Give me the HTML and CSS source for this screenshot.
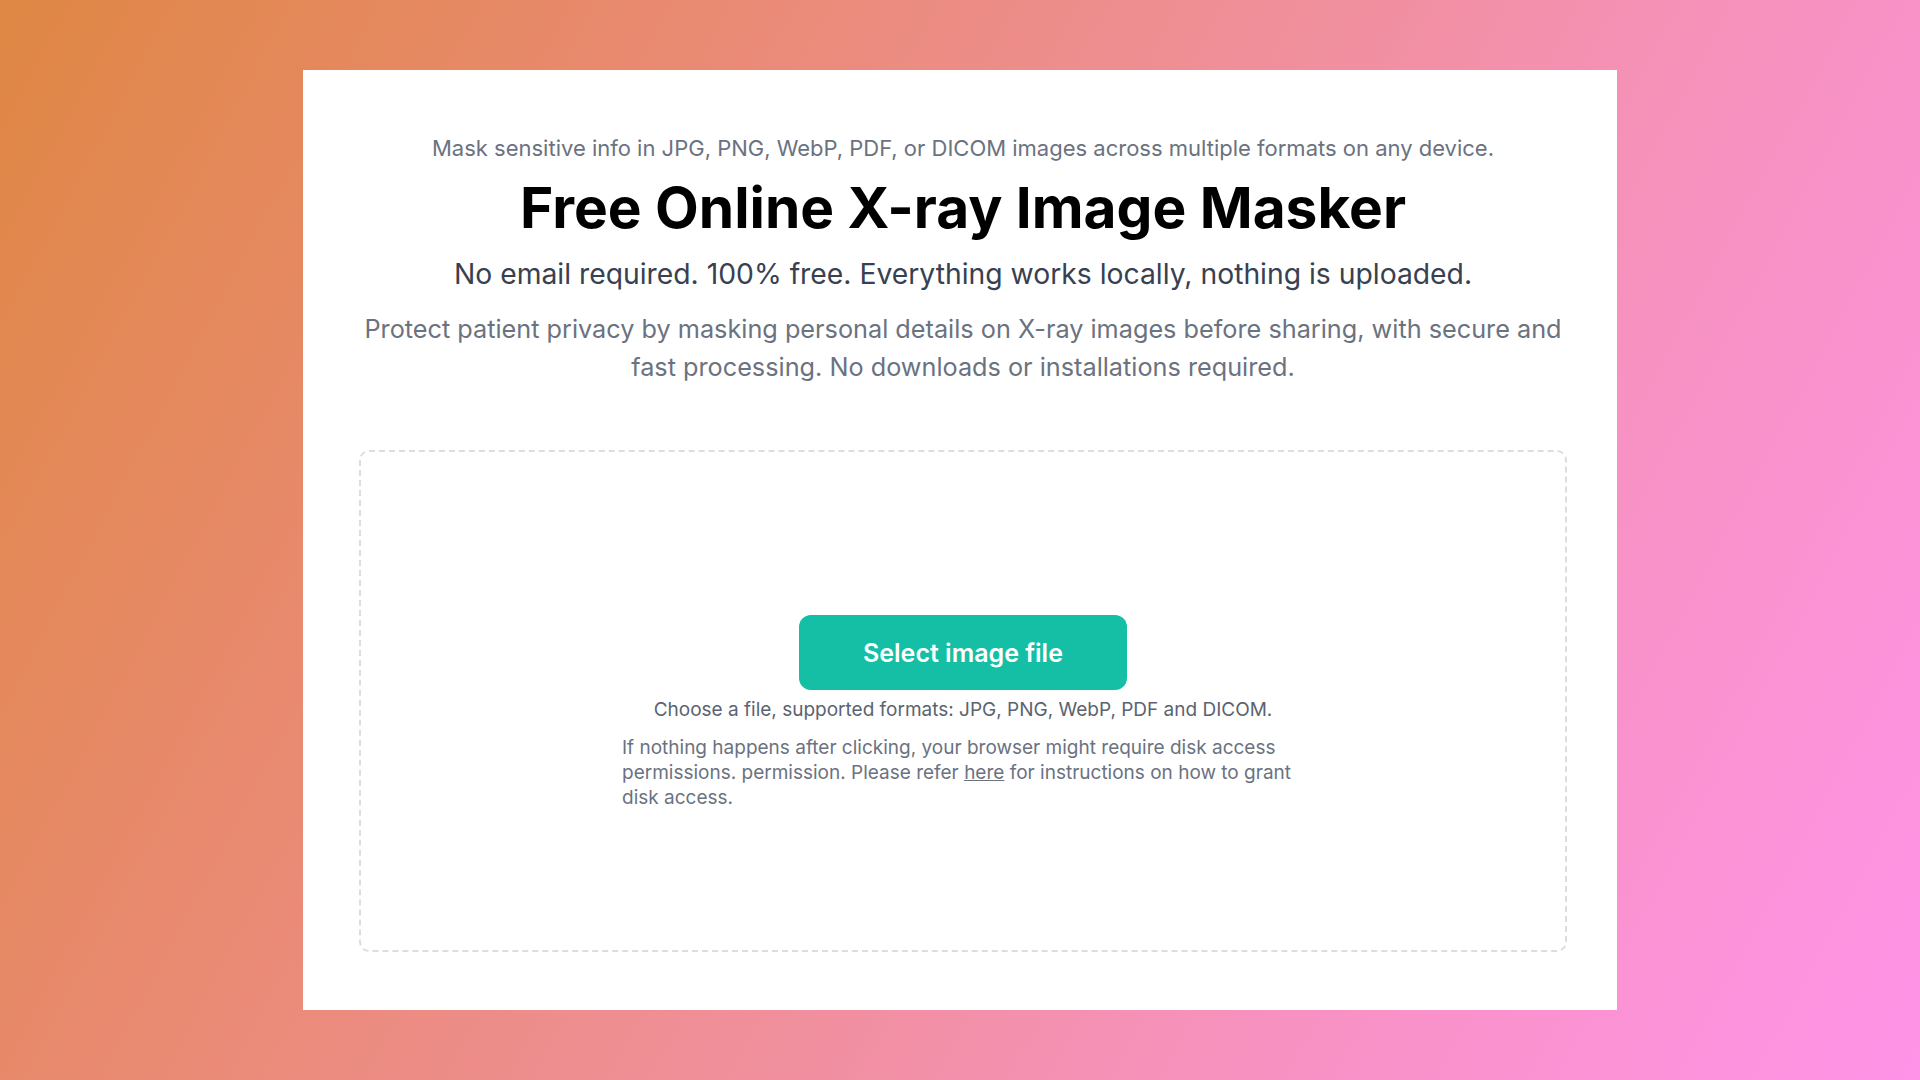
FILE: index.html
```html
<!DOCTYPE html>
<html lang="en">
<head>
<meta charset="utf-8">
<title>Free Online X-ray Image Masker</title>
<link rel="stylesheet" href="styles.css">
</head>
<body>
  <main class="card">
    <p class="eyebrow">Mask sensitive info in JPG, PNG, WebP, PDF, or DICOM images across multiple formats on any device.</p>
    <h1 class="title">Free Online X-ray Image Masker</h1>
    <p class="subtitle">No email required. 100% free. Everything works locally, nothing is uploaded.</p>
    <p class="desc">Protect patient privacy by masking personal details on X-ray images before sharing, with secure and fast processing. No downloads or installations required.</p>
    <section class="dropzone">
      <button class="select-btn" type="button">Select image file</button>
      <p class="formats">Choose a file, supported formats: JPG, PNG, WebP, PDF and DICOM.</p>
      <p class="help">If nothing happens after clicking, your browser might require disk access permissions. permission. Please refer <a href="#" class="help-link">here</a> for instructions on how to grant disk access.</p>
    </section>
  </main>
</body>
</html>
```
FILE: styles.css
```css
* { box-sizing: border-box; }

html, body {
  margin: 0;
  height: 100%;
}

body {
  font-family: Inter, "Noto Sans", "Liberation Sans", sans-serif;
  background: linear-gradient(118deg, #df8744 0%, #e98a72 28%, #f08f9a 52%, #f892c6 76%, #ff93e8 100%);
  display: flex;
  align-items: center;
  justify-content: center;
}

.card {
  width: 1314px;
  height: 940px;
  background: #ffffff;
  padding: 64px 50px 58px 56px;
  display: flex;
  flex-direction: column;
  align-items: center;
  text-align: center;
}

.eyebrow {
  margin: 0;
  font-size: 22px;
  line-height: 28px;
  color: #6b7280;
}

.title {
  margin: 14px 0 0;
  font-size: 56.8px;
  line-height: 64px;
  font-weight: 700;
  color: #000000;
}

.subtitle {
  margin: 17px 0 0;
  font-size: 28.3px;
  line-height: 34px;
  color: #374151;
}

.desc {
  margin: 19px 0 0;
  font-size: 25.25px;
  line-height: 38px;
  color: #6b7280;
}

.dropzone {
  margin-top: 64px;
  width: 100%;
  height: 502px;
  border: 2px dashed #dcdde2;
  border-radius: 10px;
  display: flex;
  flex-direction: column;
  align-items: center;
  padding-top: 163px;
}

.select-btn {
  width: 328px;
  height: 75px;
  border: none;
  border-radius: 12px;
  background: #14bfa6;
  color: #ffffff;
  font-family: inherit;
  font-size: 25px;
  font-weight: 600;
  cursor: pointer;
}

.formats {
  margin: 7px 0 0;
  font-size: 19px;
  line-height: 26px;
  color: #5b6370;
}

.help {
  margin: 12px 0 0;
  width: 682px;
  text-align: left;
  font-size: 19px;
  line-height: 25px;
  color: #6b7280;
}

.help-link {
  color: #6b7280;
  text-decoration: underline;
}
```
